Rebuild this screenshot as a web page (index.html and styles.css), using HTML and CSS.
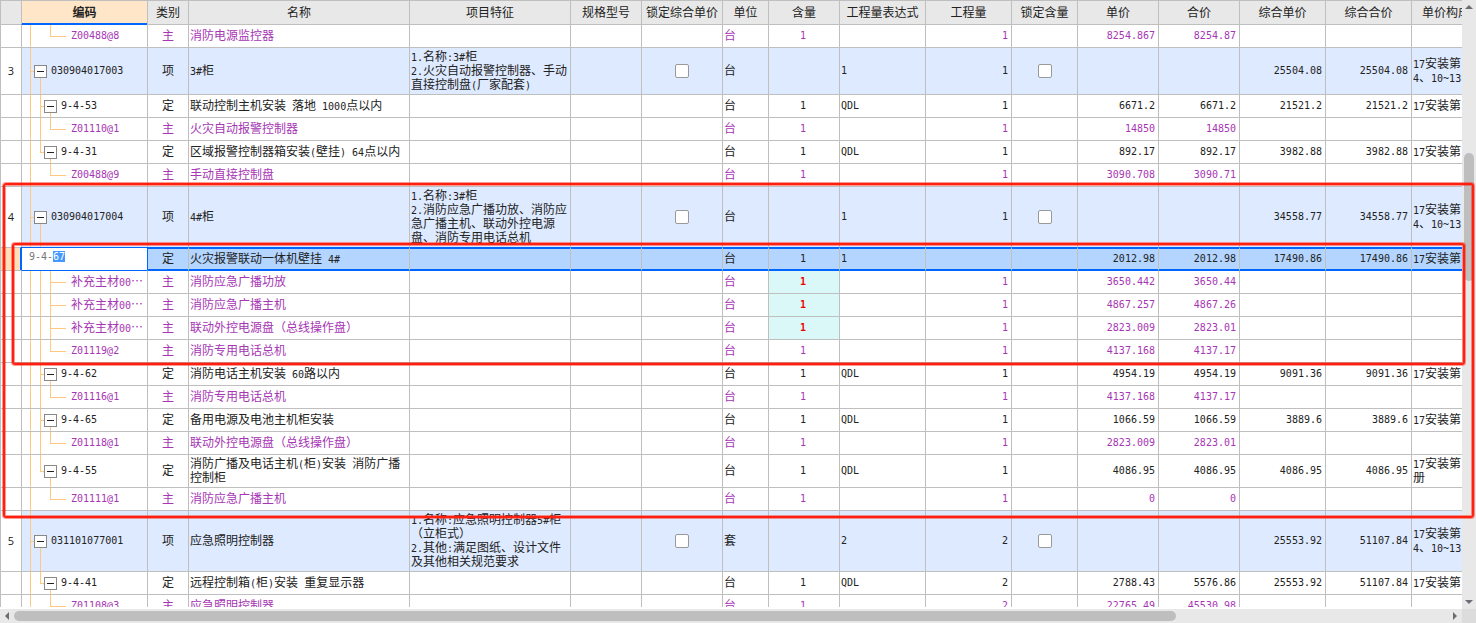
FILE: index.html
```html
<!DOCTYPE html>
<html lang="zh-CN">
<head>
<meta charset="utf-8">
<title>分部分项</title>
<link rel="stylesheet" href="styles.css">
</head>
<body>
<div class="app">
<main class="view">
<table class="grid">
<colgroup><col class="w21"><col class="w126"><col class="w41"><col class="w221"><col class="w161"><col class="w71"><col class="w81"><col class="w46"><col class="w71"><col class="w86"><col class="w86"><col class="w66"><col class="w81"><col class="w81"><col class="w86"><col class="w86"><col></colgroup>
<thead>
<tr><th></th><th class="current">编码</th><th>类别</th><th>名称</th><th>项目特征</th><th>规格型号</th><th>锁定综合单价</th><th>单位</th><th>含量</th><th>工程量表达式</th><th>工程量</th><th>锁定含量</th><th>单价</th><th>合价</th><th>综合单价</th><th>综合合价</th><th>单价构成</th></tr>
</thead>
<tbody>
<tr class="mat"><td></td><td class="leaf end tail">Z00488@8</td><td>主</td><td>消防电源监控器</td><td></td><td></td><td></td><td>台</td><td>1</td><td></td><td>1</td><td></td><td>8254.867</td><td>8254.87</td><td></td><td></td><td></td></tr>
<tr class="item h47"><td>3</td><td class="root"><button class="toggle" aria-label="折叠"></button>030904017003</td><td>项</td><td><span class="n">3#</span>柜</td><td><span class="n">1.</span>名称<span class="n">:3#</span>柜<br><span class="n">2.</span>火灾自动报警控制器、手动<br>直接控制盘<span class="n">(</span>厂家配套<span class="n">)</span></td><td></td><td><input type="checkbox" aria-label="锁定综合单价"></td><td>台</td><td></td><td>1</td><td>1</td><td><input type="checkbox" aria-label="锁定含量"></td><td></td><td></td><td>25504.08</td><td>25504.08</td><td><span class="n">17</span>安装第<br><span class="n">4</span>、<span class="n">10~13</span></td></tr>
<tr><td></td><td class="sub"><button class="toggle" aria-label="折叠"></button>9-4-53</td><td>定</td><td>联动控制主机安装<span class="n"> </span>落地<span class="n"> 1000</span>点以内</td><td></td><td></td><td></td><td>台</td><td>1</td><td>QDL</td><td>1</td><td></td><td>6671.2</td><td>6671.2</td><td>21521.2</td><td>21521.2</td><td><span class="n">17</span>安装第</td></tr>
<tr class="mat"><td></td><td class="leaf end">Z01110@1</td><td>主</td><td>火灾自动报警控制器</td><td></td><td></td><td></td><td>台</td><td>1</td><td></td><td>1</td><td></td><td>14850</td><td>14850</td><td></td><td></td><td></td></tr>
<tr><td></td><td class="sub end"><button class="toggle" aria-label="折叠"></button>9-4-31</td><td>定</td><td>区域报警控制器箱安装<span class="n">(</span>壁挂<span class="n">) 64</span>点以内</td><td></td><td></td><td></td><td>台</td><td>1</td><td>QDL</td><td>1</td><td></td><td>892.17</td><td>892.17</td><td>3982.88</td><td>3982.88</td><td><span class="n">17</span>安装第</td></tr>
<tr class="mat"><td></td><td class="leaf end tail">Z00488@9</td><td>主</td><td>手动直接控制盘</td><td></td><td></td><td></td><td>台</td><td>1</td><td></td><td>1</td><td></td><td>3090.708</td><td>3090.71</td><td></td><td></td><td></td></tr>
<tr class="item h61"><td>4</td><td class="root"><button class="toggle" aria-label="折叠"></button>030904017004</td><td>项</td><td><span class="n">4#</span>柜</td><td><span class="n">1.</span>名称<span class="n">:3#</span>柜<br><span class="n">2.</span>消防应急广播功放、消防应<br>急广播主机、联动外控电源<br>盘、消防专用电话总机</td><td></td><td><input type="checkbox" aria-label="锁定综合单价"></td><td>台</td><td></td><td>1</td><td>1</td><td><input type="checkbox" aria-label="锁定含量"></td><td></td><td></td><td>34558.77</td><td>34558.77</td><td><span class="n">17</span>安装第<br><span class="n">4</span>、<span class="n">10~13</span></td></tr>
<tr class="selected"><td></td><td class="editing"><input type="text" id="code" aria-label="编码" value="9-4-67"></td><td>定</td><td>火灾报警联动一体机壁挂<span class="n"> 4#</span></td><td></td><td></td><td></td><td>台</td><td>1</td><td>1</td><td></td><td></td><td>2012.98</td><td>2012.98</td><td>17490.86</td><td>17490.86</td><td><span class="n">17</span>安装第</td></tr>
<tr class="mat"><td></td><td class="leaf"><span class="z">补充主材<span class="n">00</span>…</span></td><td>主</td><td>消防应急广播功放</td><td></td><td></td><td></td><td>台</td><td class="changed">1</td><td></td><td>1</td><td></td><td>3650.442</td><td>3650.44</td><td></td><td></td><td></td></tr>
<tr class="mat"><td></td><td class="leaf"><span class="z">补充主材<span class="n">00</span>…</span></td><td>主</td><td>消防应急广播主机</td><td></td><td></td><td></td><td>台</td><td class="changed">1</td><td></td><td>1</td><td></td><td>4867.257</td><td>4867.26</td><td></td><td></td><td></td></tr>
<tr class="mat"><td></td><td class="leaf"><span class="z">补充主材<span class="n">00</span>…</span></td><td>主</td><td>联动外控电源盘（总线操作盘）</td><td></td><td></td><td></td><td>台</td><td class="changed">1</td><td></td><td>1</td><td></td><td>2823.009</td><td>2823.01</td><td></td><td></td><td></td></tr>
<tr class="mat"><td></td><td class="leaf end">Z01119@2</td><td>主</td><td>消防专用电话总机</td><td></td><td></td><td></td><td>台</td><td>1</td><td></td><td>1</td><td></td><td>4137.168</td><td>4137.17</td><td></td><td></td><td></td></tr>
<tr><td></td><td class="sub"><button class="toggle" aria-label="折叠"></button>9-4-62</td><td>定</td><td>消防电话主机安装<span class="n"> 60</span>路以内</td><td></td><td></td><td></td><td>台</td><td>1</td><td>QDL</td><td>1</td><td></td><td>4954.19</td><td>4954.19</td><td>9091.36</td><td>9091.36</td><td><span class="n">17</span>安装第</td></tr>
<tr class="mat"><td></td><td class="leaf end">Z01116@1</td><td>主</td><td>消防专用电话总机</td><td></td><td></td><td></td><td>台</td><td>1</td><td></td><td>1</td><td></td><td>4137.168</td><td>4137.17</td><td></td><td></td><td></td></tr>
<tr><td></td><td class="sub"><button class="toggle" aria-label="折叠"></button>9-4-65</td><td>定</td><td>备用电源及电池主机柜安装</td><td></td><td></td><td></td><td>台</td><td>1</td><td>QDL</td><td>1</td><td></td><td>1066.59</td><td>1066.59</td><td>3889.6</td><td>3889.6</td><td><span class="n">17</span>安装第</td></tr>
<tr class="mat"><td></td><td class="leaf end">Z01118@1</td><td>主</td><td>联动外控电源盘（总线操作盘）</td><td></td><td></td><td></td><td>台</td><td>1</td><td></td><td>1</td><td></td><td>2823.009</td><td>2823.01</td><td></td><td></td><td></td></tr>
<tr class="h33"><td></td><td class="sub end"><button class="toggle" aria-label="折叠"></button>9-4-55</td><td>定</td><td>消防广播及电话主机<span class="n">(</span>柜<span class="n">)</span>安装<span class="n"> </span>消防广播<br>控制柜</td><td></td><td></td><td></td><td>台</td><td>1</td><td>QDL</td><td>1</td><td></td><td>4086.95</td><td>4086.95</td><td>4086.95</td><td>4086.95</td><td><span class="n">17</span>安装第<br>册</td></tr>
<tr class="mat"><td></td><td class="leaf end tail">Z01111@1</td><td>主</td><td>消防应急广播主机</td><td></td><td></td><td></td><td>台</td><td>1</td><td></td><td>1</td><td></td><td>0</td><td>0</td><td></td><td></td><td></td></tr>
<tr class="item h61"><td>5</td><td class="root"><button class="toggle" aria-label="折叠"></button>031101077001</td><td>项</td><td>应急照明控制器</td><td><span class="n">1.</span>名称<span class="n">:</span>应急照明控制器<span class="n">5#</span>柜<br>（立柜式）<br><span class="n">2.</span>其他<span class="n">:</span>满足图纸、设计文件<br>及其他相关规范要求</td><td></td><td><input type="checkbox" aria-label="锁定综合单价"></td><td>套</td><td></td><td>2</td><td>2</td><td><input type="checkbox" aria-label="锁定含量"></td><td></td><td></td><td>25553.92</td><td>51107.84</td><td><span class="n">17</span>安装第<br><span class="n">4</span>、<span class="n">10~13</span></td></tr>
<tr><td></td><td class="sub end"><button class="toggle" aria-label="折叠"></button>9-4-41</td><td>定</td><td>远程控制箱<span class="n">(</span>柜<span class="n">)</span>安装<span class="n"> </span>重复显示器</td><td></td><td></td><td></td><td>台</td><td>1</td><td>QDL</td><td>2</td><td></td><td>2788.43</td><td>5576.86</td><td>25553.92</td><td>51107.84</td><td><span class="n">17</span>安装第</td></tr>
<tr class="mat"><td></td><td class="leaf end tail">Z01108@3</td><td>主</td><td>应急照明控制器</td><td></td><td></td><td></td><td>台</td><td>1</td><td></td><td>2</td><td></td><td>22765.49</td><td>45530.98</td><td></td><td></td><td></td></tr>
</tbody>
</table>
</main>
<div class="vbar">
<button class="arrow" aria-label="向上滚动"><svg width="8" height="4" viewBox="0 0 8 4"><path d="M4 0 8 4H0z"/></svg></button>
<div class="track"><div class="thumb"></div></div>
<button class="arrow" aria-label="向下滚动"><svg width="8" height="4" viewBox="0 0 8 4"><path d="M0 0H8L4 4z"/></svg></button>
</div>
<div class="hbar">
<button class="arrow" aria-label="向左滚动"><svg width="4" height="8" viewBox="0 0 4 8"><path d="M4 0V8L0 4z"/></svg></button>
<div class="track"><div class="thumb"></div></div>
<button class="arrow" aria-label="向右滚动"><svg width="4" height="8" viewBox="0 0 4 8"><path d="M0 0V8L4 4z"/></svg></button>
</div>
<div class="corner"></div>
<div class="mark outer"></div>
<div class="mark inner"></div>
</div>
<script src="grid.js"></script>
</body>
</html>
```

FILE: styles.css
```css
:root {
  --line: #bfbfbf;
  --blue: #0066ff;
  --purple: #a636b4;
  --guide: linear-gradient(#ffc780, #ffc780) no-repeat;
  --mono: "DejaVu Sans Mono", "Noto Sans CJK SC", monospace;
}

* { box-sizing: border-box; }

body {
  margin: 0;
  overflow: hidden;
  background: #fff;
  color: #222;
  font: 12px/14px "Noto Sans CJK SC", sans-serif;
}

.app {
  position: relative;
  display: grid;
  grid-template-columns: minmax(0, 1fr) 14px;
  grid-template-rows: minmax(0, 1fr) 14px;
  height: 100vh;
}

.view {
  overflow: hidden;
  border-bottom: 2px solid #fff;
}

.grid {
  width: 100%;
  table-layout: fixed;
  border-spacing: 0;
}

.w21 { width: 21px; }
.w41 { width: 41px; }
.w46 { width: 46px; }
.w66 { width: 66px; }
.w71 { width: 71px; }
.w81 { width: 81px; }
.w86 { width: 86px; }
.w126 { width: 126px; }
.w161 { width: 161px; }
.w221 { width: 221px; }

th, td {
  padding: 0 3px 2px 1px;
  border: 0 solid var(--line);
  border-width: 1px 0 0 1px;
  white-space: pre;
  overflow: hidden;
  vertical-align: middle;
  text-align: left;
}

th {
  height: 24px;
  padding: 0 0 2px;
  background: #e8e8e8;
  font-weight: 400;
  text-align: center;
}
th:last-child { padding-left: 10px; text-align: left; }

.current {
  background: #ffe6c8;
  font-weight: 700;
  box-shadow: inset 0 -1px var(--blue);
}

td { height: 23px; }
.h33 td { height: 33px; }
.h47 td { height: 47px; }
.h61 td { height: 61px; }

td:nth-child(3), td:nth-child(7) {
  padding: 0 0 2px;
  text-align: center;
}
td:nth-child(1), td:nth-child(9), td:nth-child(12) {
  padding: 0;
  text-align: center;
}
td:nth-child(1) { font: 11px/14px "Open Sans", sans-serif; background: #fff; }
td:nth-child(n+9):nth-child(-n+16), td:nth-child(2), .n { font-family: var(--mono); font-size: 10px; }
td:nth-child(n+10):nth-child(-n+16), td:nth-child(2) { padding-bottom: 0; }
td:nth-child(9) { padding-right: 2px; }
td:nth-child(11), td:nth-child(n+13):nth-child(-n+16) { text-align: right; }
td:nth-child(7) input, td:nth-child(12) input { vertical-align: middle; }
.n { line-height: 0; }
.z { font: 12px/14px "Noto Sans CJK SC", sans-serif; }

tbody tr:first-child td:nth-child(2) { border-top-color: var(--blue); }

.item td { background-color: #deeaff; }
.item td:first-child { background-color: #fff; }
.mat td { color: var(--purple); }
.mat td.changed { background: #daf8f8; color: #f00000; font-weight: 700; }

/* Tree column */
td.root {
  padding-left: 12px;
  background: var(--guide) 8px 0 / 1px 100%, var(--guide) 8px 50% / 5px 1px,
    var(--guide) 18px 100% / 1px 50%, #deeaff;
}
td.sub {
  padding-left: 22px;
  background: var(--guide) 8px 0 / 1px 100%, var(--guide) 18px 0 / 1px 100%,
    var(--guide) 18px 50% / 5px 1px, var(--guide) 28px 100% / 1px 50%;
}
td.sub.end {
  background: var(--guide) 8px 0 / 1px 100%, var(--guide) 18px 0 / 1px 50%,
    var(--guide) 18px 50% / 5px 1px, var(--guide) 28px 100% / 1px 50%;
}
td.leaf {
  padding-left: 49px;
  background: var(--guide) 8px 0 / 1px 100%, var(--guide) 18px 0 / 1px 100%,
    var(--guide) 28px 50% / 16px 1px, var(--guide) 28px 0 / 1px 100%;
}
td.leaf.end {
  background: var(--guide) 8px 0 / 1px 100%, var(--guide) 18px 0 / 1px 100%,
    var(--guide) 28px 50% / 16px 1px, var(--guide) 28px 0 / 1px 50%;
}
td.leaf.end.tail {
  background: var(--guide) 8px 0 / 1px 100%,
    var(--guide) 28px 50% / 16px 1px, var(--guide) 28px 0 / 1px 50%;
}

.toggle {
  width: 13px;
  height: 13px;
  margin: 0 4px 0 0;
  padding: 0;
  border: 1px solid #888;
  background: linear-gradient(#222, #222) center / 7px 1px no-repeat #fff;
  vertical-align: -3px;
}

input[type="checkbox"] {
  appearance: none;
  width: 14px;
  height: 14px;
  margin: 0;
  border: 1px solid #999;
  border-radius: 2px;
  background: #fff;
}

/* Selected row */
.selected td {
  background: #b3d5ff;
  border-top-color: var(--blue);
  box-shadow: inset 0 1px var(--blue), inset 0 -1px var(--blue);
}
.selected td:first-child {
  background: #ffe0b8;
  border-top-color: var(--line);
  border-right: 1px solid var(--blue);
  box-shadow: none;
}
.selected td.editing {
  padding: 0;
  background: #fff;
  border-left-color: var(--blue);
  box-shadow: none;
}
.selected td:nth-child(3) { border-left-color: var(--blue); }
.selected + tr td:not(:first-child) { border-top-color: var(--blue); }

.editing input {
  display: block;
  width: 100%;
  height: 22px;
  padding: 0 7px 6px;
  border: 0;
  outline: 0;
  background: transparent;
  color: #777;
  font: 10px/14px var(--mono);
  caret-color: transparent;
}
.editing input::selection { background: #4499ff; color: #fff; }

/* Scroll bars */
.vbar, .hbar { display: flex; background: #e8e8e8; }
.vbar { flex-direction: column; }
.corner { background: #dcdcdc; }
.arrow {
  display: flex;
  flex: 0 0 14px;
  align-items: center;
  justify-content: center;
  padding: 0;
  border: 0;
  background: none;
}
.arrow svg { fill: #6b6d75; }
.track { display: flex; flex: 1; min-width: 0; min-height: 0; }
.vbar .track { flex-direction: column; padding: 0 2px; }
.vbar .track::before { content: ""; flex: 0 0 24%; }
.vbar .thumb { flex: 0 0 22%; }
.hbar .track { padding: 2px 0; }
.hbar .thumb { flex: 0 0 81%; }
.thumb { border-radius: 5px; background: #bebebe; }

/* Annotation frames laid over the grid */
.mark {
  position: absolute;
  border: 2px solid #ff2010;
  border-radius: 3px;
  box-shadow: 0 0 0 1px rgba(255, 32, 16, .45), inset 0 0 0 1px rgba(255, 32, 16, .45);
  pointer-events: none;
}
.outer { left: 3px; right: 2px; top: 183px; height: 335px; }
.inner { left: 12px; right: 11px; top: 243px; height: 122px; }
```

FILE: grid.js
```js
const code = document.getElementById("code");
code.focus();
code.setSelectionRange(4, 6);
```
